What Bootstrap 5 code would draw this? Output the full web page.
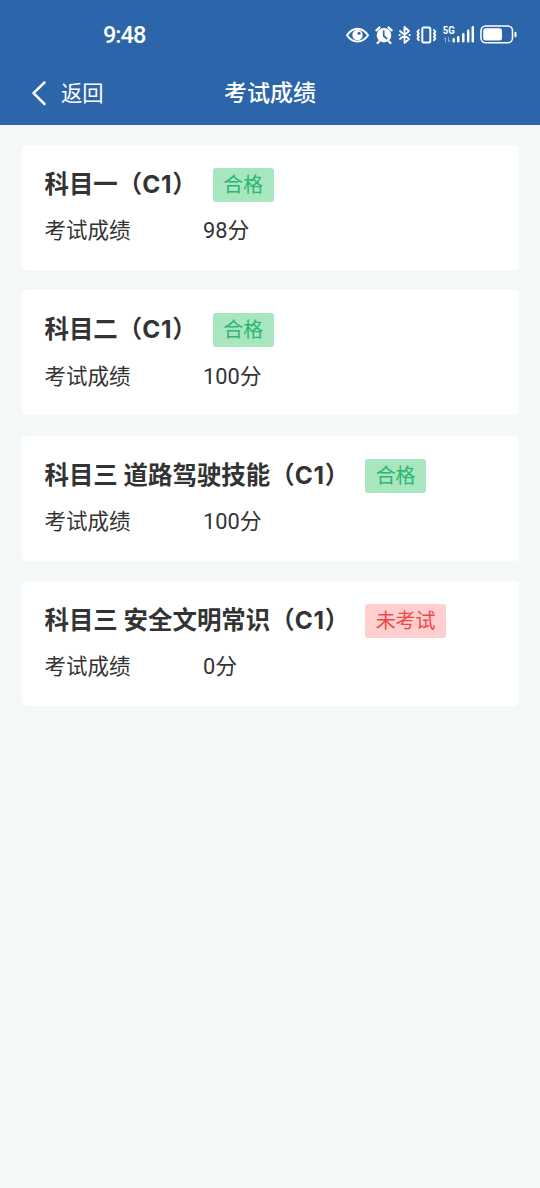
<!DOCTYPE html>
<html lang="zh-CN">
<head>
<meta charset="utf-8">
<meta name="viewport" content="width=device-width, initial-scale=1">
<title>考试成绩</title>
<link href="https://cdn.jsdelivr.net/npm/bootstrap@5.3.0/dist/css/bootstrap.min.css" rel="stylesheet">
<style>
  body { background: #f4f8f9; color: #333; font-family: "Noto Sans CJK SC", sans-serif; min-height: 100vh; }
  .app-header { background: #2c65aa; height: 125px; }
  .status-bar { height: 69px; padding: 0 23px 0 103px; }
  .clock { font-family: Roboto, sans-serif; font-size: 23.5px; line-height: 30px; font-weight: 500; letter-spacing: -1px; padding-top: 1px; }
  .status-icons { height: 22px; }
  .title-bar { height: 48px; padding-left: 31px; }
  .back-link { font-size: 21.3px; line-height: 30px; width: 193px; gap: 14px; }
  .back-link span { padding-bottom: 2px; }
  .page-title { font-size: 23px; line-height: 34px; font-weight: 500; padding-bottom: 5px; }
  .results { padding: 20px 21px 0 21.5px; gap: 20.3px; }
  .result-card { height: 125px; padding: 23px; border-radius: 4px; }
  .subject { font-family: Inter, "Noto Sans CJK SC", sans-serif; font-size: 24.45px; line-height: 32px; height: 34px; font-weight: 700; white-space: pre; }
  .licence { letter-spacing: .7px; }
  .status-tag { font-size: 20px; line-height: 32px; height: 34px; padding: 0 10.5px; border-radius: 3px; }
  .passed { background: #a8e6bf; color: #2db573; }
  .pending { background: #ffcfcf; color: #f04848; }
  .score-row { font-size: 21.5px; line-height: 31px; margin-top: 11.4px; }
  .score-label { width: 158.5px; }
  .score-value { font-family: Roboto, "Noto Sans CJK SC", sans-serif; line-height: 26px; font-size: 21.8px; }
</style>
</head>
<body>
<header class="app-header text-white">
  <div class="status-bar d-flex justify-content-between align-items-center">
    <span class="clock">9:48</span>
    <svg class="status-icons" width="172" height="22" viewBox="345 24 172 22" fill="none" stroke="#fff" stroke-linecap="round">
      <path d="M347 35.200C350 30.800 353.500 28.700 357.500 28.700S365 30.800 368 35.200C365 39.500 361.500 41.500 357.500 41.500S350 39.500 347 35.200Z" stroke-width="2" stroke-linejoin="round"/>
      <circle cx="357.500" cy="35" r="5.200" fill="#fff" stroke="none"/>
      <circle cx="359" cy="33.300" r="1.500" fill="#2c65aa" stroke="none"/>
      <circle cx="384" cy="35.200" r="7.300" fill="#fff" stroke="none"/>
      <path d="M376.300 30.300 379.500 27.500M391.700 30.300 388.500 27.500M379 41.500l-1.500 1.500M389 41.500l1.500 1.500" stroke-width="2.200"/>
      <path d="M383.700 31v5l3 2.500" stroke="#2c65aa" stroke-width="1.700"/>
      <path d="M400 31l9 8-4.500 4V27l4.500 4-9 8" stroke-width="1.800" stroke-linejoin="round"/>
      <path d="M399.500 35h.2M409.500 35h.2" stroke-width="2"/>
      <rect x="422.300" y="27.500" width="8" height="15" rx="1.500" stroke-width="2"/>
      <path d="M418.800 30l-1.300 1.700 1.300 1.700-1.300 1.700 1.300 1.700-1.300 1.700 1.300 1.700M434 30l1.300 1.700-1.300 1.700 1.300 1.700-1.300 1.700 1.300 1.700-1.300 1.700" stroke-width="1.900"/>
      <text x="442.800" y="34" font-family="Roboto, sans-serif" font-size="10" font-weight="700" fill="#fff" stroke="none" textLength="12" lengthAdjust="spacingAndGlyphs">5G</text>
      <path d="M445.500 42v-4.500l-1.500 1.500M448.500 37.500V42l1.500-1.500" stroke="#8cabd2" stroke-width="1"/>
      <path d="M453.700 39.200v2M458.200 37.200v4M463.300 34.200v7M468.200 30.700v10.500M472.800 27.200v14" stroke-width="2.500"/>
      <rect x="481" y="26" width="31.500" height="16.800" rx="4.800" stroke-width="1.600"/>
      <rect x="483.200" y="28.200" width="18.800" height="12.400" rx="2.500" fill="#fff" stroke="none"/>
      <path d="M515.500 32.800v3.400" stroke-width="2"/>
    </svg>
  </div>
  <nav class="title-bar d-flex align-items-center">
    <a class="back-link d-flex align-items-center text-white text-decoration-none" href="#">
      <svg width="16" height="26" viewBox="0 0 16 26" fill="none" stroke="#fff" stroke-width="2.500" stroke-linecap="round" stroke-linejoin="round"><path d="M13.500 2.500 2.500 13.200 13.500 24"/></svg>
      <span>返回</span>
    </a>
    <h1 class="page-title m-0">考试成绩</h1>
  </nav>
</header>
<main class="results d-flex flex-column">
  <section class="result-card card border-0">
    <div class="d-flex align-items-center"><h2 class="subject m-0">科目一（<span class="licence">C1</span>）</h2><span class="status-tag passed ms-3">合格</span></div>
    <div class="score-row d-flex align-items-baseline"><span class="score-label">考试成绩</span><span class="score-value">98分</span></div>
  </section>
  <section class="result-card card border-0">
    <div class="d-flex align-items-center"><h2 class="subject m-0">科目二（<span class="licence">C1</span>）</h2><span class="status-tag passed ms-3">合格</span></div>
    <div class="score-row d-flex align-items-baseline"><span class="score-label">考试成绩</span><span class="score-value">100分</span></div>
  </section>
  <section class="result-card card border-0">
    <div class="d-flex align-items-center"><h2 class="subject m-0">科目三 道路驾驶技能（<span class="licence">C1</span>）</h2><span class="status-tag passed ms-3">合格</span></div>
    <div class="score-row d-flex align-items-baseline"><span class="score-label">考试成绩</span><span class="score-value">100分</span></div>
  </section>
  <section class="result-card card border-0">
    <div class="d-flex align-items-center"><h2 class="subject m-0">科目三 安全文明常识（<span class="licence">C1</span>）</h2><span class="status-tag pending ms-3">未考试</span></div>
    <div class="score-row d-flex align-items-baseline"><span class="score-label">考试成绩</span><span class="score-value">0分</span></div>
  </section>
</main>
<script src="https://cdn.jsdelivr.net/npm/bootstrap@5.3.0/dist/js/bootstrap.bundle.min.js"></script>
</body>
</html>
